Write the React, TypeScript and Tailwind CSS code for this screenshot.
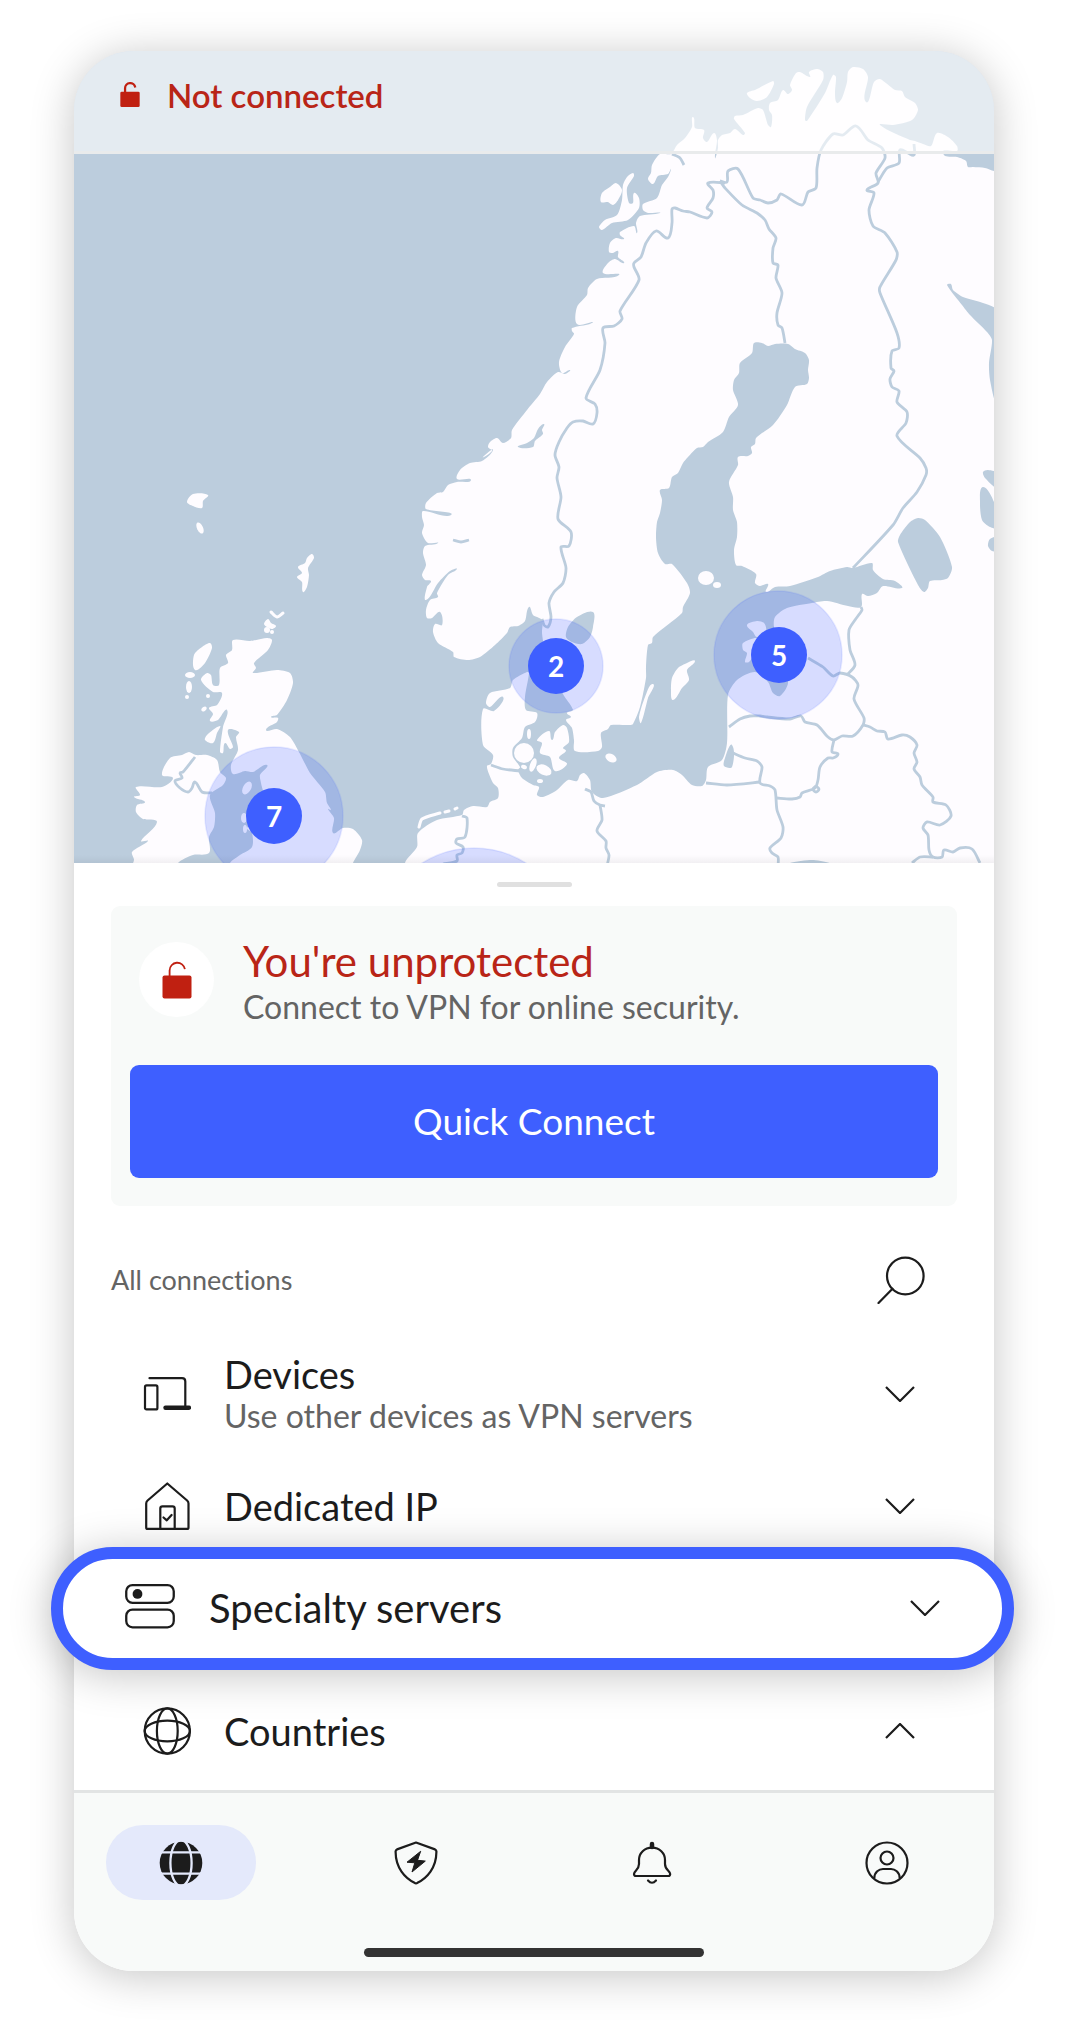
import { useState } from 'react';
import type { ReactNode } from 'react';

const MAP = { x: 74, y: 51, width: 920, height: 812 };

const MAINLAND =
  '994,171 985,168 973,167 968,167 966,161 957,157 945,156 943,151 957,151 957,146 948,137 937,133 931,146 923,144 915,141 910,140 880,125 893,125 912,120 918,110 915,103 905,97 902,91 895,90 880,79 874,82 866,102 868,77 863,69 853,67 848,72 847,82 842,98 837,103 835,93 836,77 833,75 825,93 807,121 805,120 807,107 823,80 823,72 817,69 809,72 810,77 800,72 796,73 790,85 792,90 788,94 783,90 778,100 770,103 769,110 772,115 771,127 768,125 763,110 758,108 743,115 735,116 734,119 745,133 743,135 735,129 730,133 722,135 718,140 718,148 715,158 717,140 714,133 707,142 703,138 704,130 695,128 693,117 692,127 685,138 677,145 671,154 660,154 652,165 651,173 648,179 653,184 658,176 668,174 671,169 668,177 662,185 657,198 643,204 643,210 648,213 660,213 640,216 636,223 637,233 634,226 620,232 620,235 624,239 616,238 610,243 609,252 613,253 618,251 618,257 624,263 615,259 608,263 603,273 619,275 597,279 588,288 587,295 577,307 577,324 593,322 590,324 572,328 572,331 574,334 565,347 559,362 562,373 570,370 565,374 558,372 547,382 540,394 527,410 512,430 511,438 503,443 497,438 490,442 488,447 492,451 483,457 493,450 482,461 470,463 460,470 457,479 471,480 457,482 448,485 443,492 437,493 426,503 426,509 451,515 423,511 422,517 424,525 422,533 428,543 438,543 425,546 423,553 426,565 422,575 425,580 431,581 427,587 426,600 438,583 450,571 457,569 448,575 437,593 438,597 430,600 426,610 427,618 432,618 440,612 442,625 435,624 433,632 438,643 453,652 454,657 468,660 480,657 495,645 507,633 510,627 518,626 525,621 529,607 533,615 542,620 542,633 545,650 563,694 573,710 567,713 571,717 566,720 572,728 574,740 575,751 598,751 602,747 601,733 608,729 611,725 630,725 633,724 640,707 646,678 646,667 648,645 652,643 653,637 682,613 683,607 690,593 687,583 672,564 665,564 658,553 656,537 657,522 660,513 662,500 660,490 669,488 672,477 678,473 683,463 688,457 697,448 703,447 708,442 723,432 729,417 738,405 733,390 734,380 739,373 740,363 752,353 754,343 762,343 768,346 775,344 788,344 795,349 805,353 809,360 808,370 809,378 807,384 795,387 787,405 773,425 756,438 755,444 751,447 752,453 748,456 738,457 738,465 729,482 733,497 733,510 737,522 737,537 734,550 736,565 742,566 756,574 755,583 760,586 768,584 766,592 775,587 790,586 818,577 830,571 847,567 853,568 872,563 873,570 883,579 895,581 902,588 883,586 877,593 868,596 862,594 861,607 848,606 827,601 812,603 787,608 775,617 774,627 782,655 788,683 780,696 773,693 768,682 755,672 737,680 728,695 727,743 722,760 708,767 706,780 702,786 692,785 682,775 673,770 657,772 637,785 603,798 592,792 590,780 584,773 580,775 577,781 568,780 557,790 543,797 537,795 539,787 533,785 522,778 518,770 520,767 513,757 513,748 522,738 525,727 535,722 537,713 526,710 525,697 529,673 527,672 513,680 510,688 490,693 486,703 490,707 503,697 494,711 483,709 483,745 493,755 491,764 487,766 489,774 493,783 498,788 498,798 490,802 487,807 473,806 464,810 462,815 437,820 418,833 417,847 405,863 405,900 1030,900 1030,171';

const BRITAIN =
  '233,640 250,641 267,638 272,640 268,650 254,663 256,668 253,673 277,670 290,673 293,683 287,700 277,715 271,717 278,718 277,722 266,730 277,729 290,737 299,752 310,773 325,792 327,803 331,810 328,809 334,818 333,833 343,828 353,829 362,840 360,850 353,863 340,900 215,900 230,863 240,855 252,847 252,833 247,828 265,805 261,783 260,775 267,765 253,772 245,771 233,774 231,765 238,750 236,737 239,732 228,730 233,747 230,749 225,743 223,753 220,752 223,727 227,710 218,720 210,721 213,714 209,708 217,705 222,693 213,692 201,680 207,673 211,675 213,685 219,685 220,668 228,663 226,655 232,650';

const IRELAND =
  '189,752 196,755 207,755 217,760 220,772 226,778 223,785 210,795 215,813 214,827 209,837 209,853 193,855 178,863 160,890 125,890 134,860 132,852 148,841 141,841 157,822 143,819 136,812 137,805 145,802 134,797 140,795 136,787 162,787 173,778 162,775 170,758 182,755';

const ISLANDS = [
  // Lofoten and Sørøya
  '616,183 622,190 618,200 613,205 608,202 601,202 602,193 610,187',
  '633,173 634,176 627,188 629,203 633,203 634,193 639,198 639,208 628,220 612,223 602,230 599,227 605,220 617,215 622,200 623,185 627,177',
  '747,93 755,90 773,81 774,84 767,97 757,101 750,98',
  // Gotland, Öland
  '695,661 687,670 689,680 682,688 673,700 671,690 672,678 678,668 687,663',
  '653,684 648,698 641,723 639,717 645,697',
  // Hiiumaa, Saaremaa
  '747,625 757,621 764,623 766,630 757,637 753,632',
  '743,643 757,638 770,645 765,655 755,655 749,662 745,662 747,653 743,650',
  // Zealand
  '537,740 549,731 552,740 555,732 563,725 567,728 569,742 563,748 566,751 559,758 567,764 555,771 550,757 540,753 542,743',
  // Islay, Hebrides, Orkney, Shetland
  '220,726 207,735 205,740 213,743 217,733',
  '210,643 212,648 205,663 195,670 194,655 202,647',
  '268,619 271,623 276,626 272,629 267,627 264,624',
  '312,554 314,558 308,568 309,575 307,587 303,592 302,582 297,577 302,573 298,567 305,563 307,558',
  // Faroe
  '193,494 208,495 203,501 202,508 193,506 187,502',
];

// cx, cy, rx, ry, rotation
const ISLETS = [
  [200, 528, 3, 6, -25],
  [190, 675, 5, 3, 0],
  [189, 687, 3, 6, 0],
  [187, 697, 2, 2, 0],
  [208, 696, 2, 2, 0],
  [204, 709, 3, 2, -35],
  [267, 630, 3, 3, 0],
  [272, 632, 2, 2, 0],
  [247, 788, 4, 7, 30],
  [244, 818, 3, 5, 0],
  [245, 829, 2, 4, 0],
  [706, 578, 8, 7, 0],
  [717, 585, 4, 3, 0],
  [611, 758, 6, 4, 30],
  [524, 753, 10, 10, 0],
  [533, 765, 3, 7, 20],
  [524, 767, 3, 2, 20],
  [544, 770, 8, 5, 25],
  [540, 781, 3, 2, 0],
  [529, 734, 2, 5, 0],
];

const WATERS = [
  '947,285 951,284 953,290 963,297 983,303 996,310 996,402 990,380 989,363 992,340 987,332 970,315 962,305',
  '918,518 925,520 940,537 952,567 948,578 942,580 930,581 928,588 924,592 918,585 898,542 900,535 910,522',
  '983,472 988,470 1000,474 1000,489 985,478',
  '983,487 994,502 1000,528 990,527 982,520 980,503',
  '1000,537 990,539 988,546 992,551 1000,551',
  '593,612 593,627 590,637 582,644 572,642 566,637 568,627 577,617',
  '732,745 732,767 724,766 725,758',
  '518,447 527,443 534,438 538,429 544,424 542,430 543,434 535,441 533,447',
  '790,864 812,860 830,864',
];

const BORDERS = [
  // Norway / Sweden
  '725,183 708,183 713,190 713,198 707,208 712,212 707,218 690,212 683,211 675,208 672,209 672,223 668,238 656,231 646,243 641,257 634,263 634,267 639,280 620,311 622,319 614,326 603,328 605,343 600,370 586,398 595,404 597,413 593,424 583,421 573,422 567,428 559,442 555,455 559,467 557,478 561,497 558,519 571,532 569,546 561,547 566,568 563,583 554,592 549,603 551,617 548,627 544,625 542,619',
  // Norway / Finland / Russia
  '720,181 727,182 728,171 738,169 753,198 760,200 768,203 777,200 781,194 802,205 808,192 816,188 817,168 821,150 833,134 843,135 856,126 868,140 882,148 885,158 876,173 878,183 867,190 874,193 869,210 873,226 885,233 897,252 896,260 880,287 880,293 897,333 899,348 892,351 891,368 894,371 890,379 892,387 899,391 897,402 907,412 906,423 897,436 920,458 926,468 926,475 917,492 903,508 893,525 853,568',
  '878,182 887,168 899,163 900,150 908,153 914,155 914,144',
  // Sweden / Finland
  '720,181 725,188 742,205 757,213 765,220 769,229 776,238 773,248 773,263 778,265 776,278 782,293 777,313 778,325 782,328 785,343',
  // Baltics
  '861,607 862,610 855,620 849,630 850,650 855,665 847,675',
  '808,658 823,667 833,676 840,673 852,677 858,685 854,699 864,718 863,725 853,736 842,736 834,740 828,737 817,725 805,722 801,716 790,719 767,717 760,716 750,716 740,719 729,727',
  '863,725 870,727 877,731 885,732 888,739 902,735 910,737 917,745 914,753 917,762 914,769 920,777 922,785 933,797 933,802 946,805 951,816 940,825 927,822 923,828 928,835 929,850 933,857 942,857 944,850 953,852 960,848 972,849 980,863',
  '933,857 920,857 912,863',
  '834,740 832,752 838,754 833,758 828,758 820,767 818,780 815,788 802,793 800,797 792,799 777,798',
  '816,786 819,789 816,792 813,789 816,786',
  '706,783 727,785 760,782',
  '733,753 745,758 757,761 762,767 760,783 770,786 775,790 777,810 783,827 781,838 770,848 772,853 778,857 778,866',
  // Germany / Poland, Denmark / Germany, Netherlands / Germany
  '585,789 591,792 594,801 600,805 605,806',
  '600,805 602,820 597,831 606,841 606,848 609,855 607,866',
  '491,765 503,769 520,771',
  '462,816 467,818 465,837 457,839 456,843 463,847 462,853 457,855 457,861 443,864',
  // Ireland
  '195,757 183,772 180,773 182,778 175,781 180,788 188,792 192,788 195,782 202,792 212,793',
  // fjords
  '672,154 680,158 684,165',
  '453,540 461,542 469,540',
];

const SHOALS = ['419,827 422,819 440,813', '445,812 449,811', '455,809 457,808', '271,612 277,617 283,613'];

const CLUSTERS = [
  { count: 2, x: 556, y: 666 },
  { count: 5, x: 779, y: 655 },
  { count: 7, x: 274, y: 816 },
];

const HALOS = [
  { x: 556, y: 666, r: 47 },
  { x: 778, y: 655, r: 64 },
  { x: 274, y: 816, r: 69 },
  { x: 474, y: 945, r: 97 },
];

// Turns a list of points into a softly rounded path
function toPath(points: string, closed = false) {
  const p = points.split(' ').map((pair) => pair.split(',').map(Number));
  const n = p.length;
  const at = (i: number) => (closed ? p[(i + n) % n] : p[Math.min(Math.max(i, 0), n - 1)]);
  let d = `M${p[0][0]} ${p[0][1]}`;
  for (let i = 0; i < (closed ? n : n - 1); i++) {
    const [a, b, c, e] = [at(i - 1), at(i), at(i + 1), at(i + 2)];
    const len = Math.hypot(c[0] - b[0], c[1] - b[1]);
    const handle = (from: number[], to: number[]) => {
      const l = Math.hypot(to[0] - from[0], to[1] - from[1]) || 1;
      return [((to[0] - from[0]) / l) * len * 0.25, ((to[1] - from[1]) / l) * len * 0.25];
    };
    const h1 = handle(a, c);
    const h2 = handle(b, e);
    d += `C${(b[0] + h1[0]).toFixed(1)} ${(b[1] + h1[1]).toFixed(1)} ${(c[0] - h2[0]).toFixed(1)} ${(c[1] - h2[1]).toFixed(1)} ${c[0]} ${c[1]}`;
  }
  return closed ? d + 'Z' : d;
}

function WorldMap() {
  return (
    <svg
      className="block h-auto w-full"
      viewBox={`${MAP.x} ${MAP.y} ${MAP.width} ${MAP.height}`}
      aria-hidden="true"
    >
      <g fill="#fefcff">
        {[MAINLAND, BRITAIN, IRELAND, ...ISLANDS].map((points) => (
          <path key={points} d={toPath(points, true)} />
        ))}
        {ISLETS.map(([cx, cy, rx, ry, angle]) => (
          <ellipse key={`${cx}-${cy}`} cx={cx} cy={cy} rx={rx} ry={ry} transform={`rotate(${angle} ${cx} ${cy})`} />
        ))}
      </g>
      <g fill="#bccddd">
        {WATERS.map((points) => (
          <path key={points} d={toPath(points, true)} />
        ))}
      </g>
      <g fill="none" stroke="#bccddd" strokeWidth="2.8" strokeLinejoin="round">
        {BORDERS.map((points) => (
          <path key={points} d={toPath(points)} />
        ))}
      </g>
      <g fill="none" stroke="#fefcff" strokeWidth="3" strokeLinecap="round">
        {SHOALS.map((points) => (
          <path key={points} d={toPath(points)} />
        ))}
      </g>
      <g fill="#3e5fff" fillOpacity="0.2" stroke="#3e5fff" strokeOpacity="0.12" strokeWidth="1.5">
        {HALOS.map((halo) => (
          <circle key={halo.x} cx={halo.x} cy={halo.y} r={halo.r} />
        ))}
      </g>
    </svg>
  );
}

function UnlockIcon({ className, strokeWidth }: { className: string; strokeWidth: number }) {
  return (
    <svg className={className} viewBox="0 0 30 38" fill="none" aria-hidden="true">
      <rect x="0.5" y="14.5" width="29" height="23" rx="2" fill="#c02011" />
      <path d="M7.6 16V9.5a7.7 7.7 0 0 1 15.3-1.3" stroke="#c02011" strokeWidth={strokeWidth} />
    </svg>
  );
}

function Chevron({ up = false }: { up?: boolean }) {
  return (
    <svg className="w-[30px] shrink-0" viewBox="0 0 30 16" fill="none" stroke="#1c1c1c" strokeWidth="2.2" aria-hidden="true">
      <path d={up ? 'M1 15 15 1l14 14' : 'M1 1l14 14L29 1'} />
    </svg>
  );
}

function LineIcon({ className = 'size-12', children }: { className?: string; children: ReactNode }) {
  return (
    <svg
      className={`shrink-0 ${className}`}
      viewBox="0 0 48 48"
      fill="none"
      stroke="#1c1c1c"
      strokeWidth="2.2"
      strokeLinecap="round"
      strokeLinejoin="round"
      aria-hidden="true"
    >
      {children}
    </svg>
  );
}

function DevicesIcon() {
  return (
    <LineIcon>
      <path d="M6.5 8.2H39q3.300 0 3.300 3.300V36" />
      <path d="M22.500 37.700h23.500" strokeWidth="4.400" />
      <rect x="2" y="15.400" width="12.400" height="24" rx="1.500" />
    </LineIcon>
  );
}

function HouseIcon() {
  return (
    <LineIcon>
      <path d="M24.3 1.5 4.6 18.5Q3.2 19.8 3.2 21.5V45.4q0 1.5 1.5 1.5H44q1.5 0 1.5-1.5V21.5q0-1.7-1.4-3z" />
      <path d="M17.3 47V26.5q0-2.2 2.2-2.2h10q2.2 0 2.2 2.2V47" />
      <path d="M20.5 35.5l3.3 2.8 4.800-5.300" />
    </LineIcon>
  );
}

function ServersIcon() {
  return (
    <LineIcon className="size-[50px]">
      <rect x="1.200" y="2" width="45.600" height="17" rx="6" />
      <rect x="1.200" y="25.500" width="45.600" height="17" rx="6" />
      <circle cx="12" cy="10.500" r="4.700" fill="#1c1c1c" stroke="none" />
    </LineIcon>
  );
}

function GlobeIcon() {
  return (
    <LineIcon>
      <circle cx="24.3" cy="24" r="22.6" />
      <ellipse cx="24.3" cy="24" rx="10.4" ry="22.6" />
      <ellipse cx="24.3" cy="24" rx="22.6" ry="10.4" />
    </LineIcon>
  );
}

function ConnectionRow({ icon, title, subtitle, open = false }: { icon: ReactNode; title: string; subtitle?: string; open?: boolean }) {
  return (
    <button type="button" aria-expanded={open} className="flex h-28 w-full items-center pr-[42px] pl-8 text-left">
      {icon}
      <span className="ml-[33px] flex flex-1 flex-col">
        <span className="text-[38px] leading-11 text-[#1c1c1c]">{title}</span>
        {subtitle && <span className="text-[32px] leading-10 text-[#646464]">{subtitle}</span>}
      </span>
      <Chevron up={open} />
    </button>
  );
}

const TABS = [
  {
    label: 'Map',
    icon: (
      <>
        <circle cx="22" cy="22" r="21.3" fill="#1c1c1c" stroke="none" />
        <ellipse cx="22" cy="22" rx="10.6" ry="23" stroke="#e4e9fb" strokeWidth="2.3" />
        <path d="M0 11.4h44M0 32.7h44" stroke="#e4e9fb" strokeWidth="2.3" />
      </>
    ),
  },
  {
    label: 'Threat protection',
    icon: (
      <>
        <path d="M22 1.5 41 8.4q1.600.8 1.400 2.600C42.3 27 33 37 23.5 41.8q-1.500 1-3 0C11 37 1.7 27 1.6 11q-.2-1.800 1.400-2.600z" />
        <path d="M26.4 10.5 13 21.2l7.800.6L18 31l13.300-10.900-7.500-.8z" fill="#1c1c1c" strokeWidth="1" />
      </>
    ),
  },
  {
    label: 'Notifications',
    icon: (
      <>
        <path d="M22 6.7C29.5 6.7 35 12 35 19v4c0 6 5.2 7 5.2 10q0 2-2 2H6q-2 0-2-2c0-3 5-4 5-10v-4C9 12 14.5 6.7 22 6.7z" />
        <path d="M18 39.5q4 4.500 8 0" />
        <path d="M22 3v3" strokeWidth="4.500" />
      </>
    ),
  },
  {
    label: 'Profile',
    icon: (
      <>
        <circle cx="22" cy="22" r="20.5" />
        <circle cx="22" cy="17" r="6.500" />
        <path d="M9.3 37C9.5 31 14 28 18 28h8c4 0 8.500 3 8.700 9" />
      </>
    ),
  },
];

function TabBar() {
  const [active, setActive] = useState('Map');

  return (
    <nav className="rounded-b-[60px] border-t-3 border-[#e2e4e4] bg-[#f8faf9] px-8 pt-8 pb-[14px]">
      <div className="flex justify-between">
        {TABS.map((tab) => (
          <button
            key={tab.label}
            type="button"
            aria-label={tab.label}
            onClick={() => setActive(tab.label)}
            className={`flex h-[75px] w-[150px] items-center justify-center rounded-[37px] ${active === tab.label ? 'bg-[#e4e9fb]' : ''}`}
          >
            <svg
              className="size-11"
              viewBox="0 0 44 44"
              fill="none"
              stroke="#1c1c1c"
              strokeWidth="2.2"
              strokeLinecap="round"
              strokeLinejoin="round"
              aria-hidden="true"
            >
              {tab.icon}
            </svg>
          </button>
        ))}
      </div>
      <div className="mx-auto mt-12 h-[9px] w-[340px] rounded-full bg-[#333333]" />
    </nav>
  );
}

export default function App() {
  return (
    <main className="min-h-screen bg-white pt-[51px] pr-[71px] pb-[52px] pl-[74px] font-['Lato',sans-serif] [font-variant-ligatures:none]">
      <div className="rounded-[60px] bg-white shadow-[0_5px_44px_rgba(0,0,0,0.23)]">
        <section className="relative overflow-hidden rounded-t-[60px] bg-[#bccddd]">
          <WorldMap />
          {CLUSTERS.map((cluster) => (
            <button
              key={cluster.count}
              type="button"
              className="absolute flex size-14 -translate-1/2 items-center justify-center rounded-full bg-[#3e5fff] text-[28px] leading-8 font-bold text-white"
              style={{
                left: `${((cluster.x - MAP.x) / MAP.width) * 100}%`,
                top: `${((cluster.y - MAP.y) / MAP.height) * 100}%`,
              }}
            >
              {cluster.count}
            </button>
          ))}
          <header className="absolute inset-x-0 top-0 border-b-3 border-[#e9ebec] bg-white/60 bg-clip-padding pb-3 pl-[46px]">
            <p className="flex h-[88px] items-center gap-[27px] text-[33px] leading-10 font-semibold text-[#b92517]">
              <UnlockIcon className="w-5" strokeWidth={3.4} />
              Not connected
            </p>
          </header>
          <div className="absolute inset-x-0 bottom-0 h-2 bg-linear-to-t from-black/5 to-transparent" />
        </section>

        <section className="px-[37px] pt-[19px] pb-[3px]">
          <div className="mx-auto h-[5px] w-[75px] rounded-full bg-[#e0e0e0]" />

          <div className="mt-[19px] rounded-[9px] bg-[#f8faf9] px-[19px] pt-[31px] pb-7">
            <div className="flex gap-[29px] pl-[9px]">
              <div className="mt-[5px] flex size-[75px] shrink-0 items-center justify-center rounded-full bg-white">
                <UnlockIcon className="w-[30px]" strokeWidth={1.8} />
              </div>
              <div>
                <h1 className="text-[42px] leading-12 text-[#b92517]">You're unprotected</h1>
                <p className="text-[32px] leading-11 text-[#646464]">Connect to VPN for online security.</p>
              </div>
            </div>
            <button type="button" className="mt-9 h-[113px] w-full rounded-[9px] bg-[#3e5fff] pb-0.5 text-[37px] leading-11 text-white">
              Quick Connect
            </button>
          </div>

          <div className="mt-[18px] mb-0.5 flex h-28 items-center justify-between pr-8">
            <h2 className="text-[27px] leading-8 text-[#646464]">All connections</h2>
            <button type="button" aria-label="Search">
              <LineIcon>
                <circle cx="28.3" cy="20" r="18.300" />
                <path d="M15.500 32.700 1.500 47" />
              </LineIcon>
            </button>
          </div>

          <ConnectionRow icon={<DevicesIcon />} title="Devices" subtitle="Use other devices as VPN servers" />
          <ConnectionRow icon={<HouseIcon />} title="Dedicated IP" />
          <button
            type="button"
            aria-expanded={false}
            className="relative z-10 -mt-[15px] mb-[5px] -ml-[60px] flex h-[123px] w-[calc(100%+117px)] items-center rounded-full border-12 border-[#3e5fff] bg-white px-[62px] pb-0.5 text-left shadow-[0_5px_44px_rgba(0,0,0,0.23)]"
          >
            <ServersIcon />
            <span className="ml-[34px] flex-1 text-[40px] leading-11 text-[#1c1c1c]">Specialty servers</span>
            <Chevron />
          </button>
          <ConnectionRow icon={<GlobeIcon />} title="Countries" open />
        </section>

        <TabBar />
      </div>
    </main>
  );
}
